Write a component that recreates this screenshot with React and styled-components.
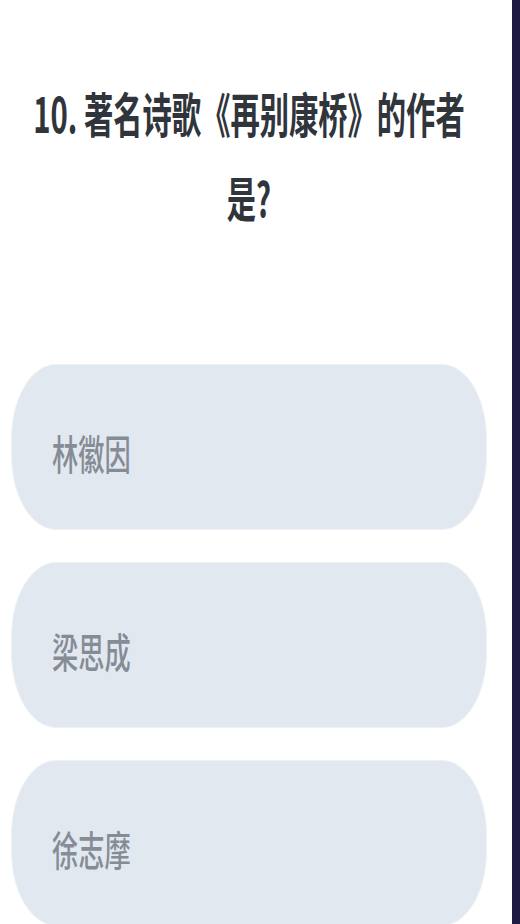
import React from "react";
import styled, { createGlobalStyle } from "styled-components";

const GlobalStyle = createGlobalStyle`
  html, body {
    margin: 0;
    padding: 0;
    background: #ffffff;
    overflow: hidden;
  }
  body {
    font-family: "Noto Sans CJK SC", "Noto Sans", sans-serif;
  }
`;

const Screen = styled.div`
  display: flex;
  width: 520px;
  height: 924px;
  overflow: hidden;
  background: #ffffff;
`;

const Main = styled.main`
  flex: 1;
  display: flex;
  flex-direction: column;
  padding: 70px 26px 0 12px;
  min-width: 0;
`;

const SideBar = styled.aside`
  flex: none;
  width: 8px;
  background: #1f1a44;
`;

const TitleBox = styled.div`
  display: flex;
  justify-content: center;
  height: 168px;
  margin-bottom: 127px;
`;

const Title = styled.h1`
  flex: none;
  width: 730px;
  margin: 0;
  font-size: 48px;
  font-weight: 600;
  line-height: 84px;
  color: #30343b;
  text-align: center;
  transform: scaleX(0.61);
  transform-origin: center top;
`;

const Options = styled.div`
  display: flex;
  flex-direction: column;
  gap: 34px;
`;

const Option = styled.button`
  display: flex;
  align-items: center;
  height: 164px;
  padding: 10px 0 0 40px;
  border: none;
  border-radius: 44px / 74px;
  background: #e2e8f0;
  box-shadow: 0 0 0 1px #eef1f5;
  cursor: pointer;
  text-align: left;
  font-family: inherit;
`;

const OptionLabel = styled.span`
  display: inline-block;
  font-size: 41px;
  font-weight: 500;
  color: #868c95;
  line-height: 1;
  white-space: nowrap;
  transform: scaleX(0.64);
  transform-origin: left center;
`;

const options = ["林徽因", "梁思成", "徐志摩"];

export default function App() {
  return (
    <>
      <GlobalStyle />
      <Screen>
        <Main>
          <TitleBox>
            <Title>10. 著名诗歌《再别康桥》的作者是?</Title>
          </TitleBox>
          <Options>
            {options.map((o) => (
              <Option key={o}>
                <OptionLabel>{o}</OptionLabel>
              </Option>
            ))}
          </Options>
        </Main>
        <SideBar />
      </Screen>
    </>
  );
}
